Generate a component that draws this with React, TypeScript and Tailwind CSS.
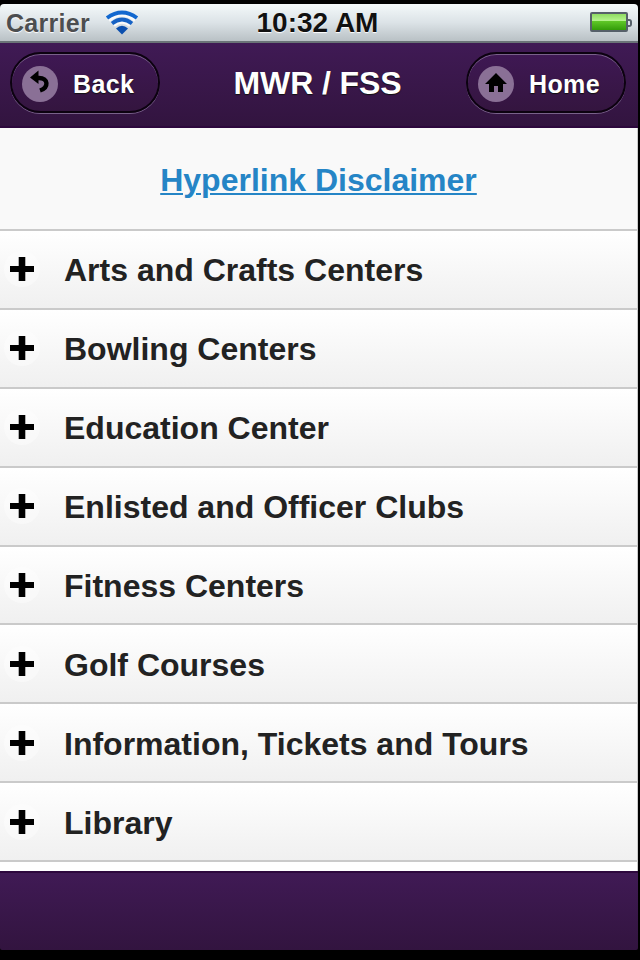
const sections = [
  'Arts and Crafts Centers',
  'Bowling Centers',
  'Education Center',
  'Enlisted and Officer Clubs',
  'Fitness Centers',
  'Golf Courses',
  'Information, Tickets and Tours',
  'Library',
];

function StatusBar() {
  return (
    <div className="flex h-[39px] shrink-0 items-center justify-between rounded-t-[4px] border-b-2 border-[#6b7478] bg-linear-to-b from-[#f4f9fa] via-[#dce3e7] to-[#b9c1c5] pr-[6px] pl-[6px]">
      <div className="flex w-[220px] items-center gap-[15px]">
        <span className="pt-px text-[25px] leading-none font-bold tracking-[0.3px] text-[#4c4e50] [text-shadow:0_1px_1px_#fff]">Carrier</span>
        <svg width="34" height="26" viewBox="0 0 34 26" className="mt-px" fill="none">
          <g stroke="#fff" strokeWidth="6" opacity=".8">
            <path d="M3 9.500Q17-2.500 31 9.500M8 14.500Q17 7 26 14.500" />
          </g>
          <path d="M2 8Q17-3 32 8" stroke="#1268cf" strokeWidth="4" />
          <path d="M7 13.500Q17 5.500 27 13.500" stroke="#1662c4" strokeWidth="3.800" />
          <path d="M11 18.500Q17 13 23 18.500L17 24.500Z" fill="#0b4fae" />
        </svg>
      </div>
      <span className="-ml-[3px] text-[28px] leading-none font-bold text-[#111] [text-shadow:0_1px_1px_#fff]">10:32 AM</span>
      <div className="flex w-[220px] items-center justify-end">
        <div className="mb-px h-[20px] w-[38px] rounded-[2px] border-2 border-[#566069] bg-linear-to-b from-[#7ddb45] via-[#5bc424] to-[#329b08]">
          <div className="h-[7px] bg-linear-to-b from-[#8fdc62] to-[#b6f58f]" />
        </div>
        <div className="h-[8px] w-[4px] rounded-r-[3px] border-2 border-l-0 border-[#566069]" />
      </div>
    </div>
  );
}

function NavButton({ label, children }: { label: string; children: React.ReactNode }) {
  return (
    <button className="flex h-[61px] items-center rounded-full border-2 border-[#0c0210] bg-linear-to-b from-[#3f1854] to-[#34153f] pt-[2px] pl-[10px] shadow-[0_1px_0_#79618a,inset_0_1px_0_#79618a]">
      <span className="flex size-[36px] items-center justify-center rounded-full bg-[#8a7096]">{children}</span>
      <span className="ml-[15px] pt-[2px] text-[25px] font-bold tracking-[0.4px] text-white [text-shadow:0_1px_1px_#111]">{label}</span>
    </button>
  );
}

function Header() {
  return (
    <header className="flex h-[85px] shrink-0 items-start justify-between border-b-2 border-[#2d083d] bg-linear-to-b from-[#401a55] to-[#32143f] pt-[9px] pr-[12px] pl-[10px]">
      <div className="grid w-[150px]">
        <NavButton label="Back">
          <svg width="22" height="24" viewBox="0 0 22 24" className="mb-[4px]">
            <path d="M1 7.500L9.500 0.500V14Z" />
            <path d="M7 8H10C19.500 8 20 17.500 11 20.500" fill="none" stroke="#000" strokeWidth="4.400" />
          </svg>
        </NavButton>
      </div>
      <h1 className="mt-[13px] ml-[9px] text-[32px] leading-[36px] font-bold tracking-[-0.1px] text-white [text-shadow:0_1px_1px_#111]">MWR / FSS</h1>
      <div className="grid w-[160px]">
        <NavButton label="Home">
          <svg width="22" height="20" viewBox="0 0 22 20" className="mb-[2px]">
            <path d="M11 0L22 11H18V19H13V13H9V19H4V11H0Z" />
          </svg>
        </NavButton>
      </div>
    </header>
  );
}

export default function App() {
  return (
    <div className="flex h-[960px] w-[640px] flex-col overflow-hidden bg-black pt-[4px] pr-[2px] font-['Liberation_Sans',Arial,sans-serif]">
      <StatusBar />
      <Header />
      <main className="h-[743px] shrink-0 overflow-hidden border-r border-[#ccc] bg-white">
        <div className="flex h-[101px] items-center justify-center bg-[#f9f9f9] pt-[3px]">
          <a className="text-[32px] leading-[40px] font-bold text-[#2585c6] underline decoration-2 underline-offset-[2px]">Hyperlink Disclaimer</a>
        </div>
        <ul>
          {sections.map((title) => (
            <li key={title} className="flex h-[78.9px] items-center border-t-2 border-[#cacaca] bg-linear-to-b from-white to-[#f0f0f0] pl-[4px]">
              <span className="flex size-[36px] items-center justify-center rounded-full bg-white/40">
                <svg width="24" height="24" viewBox="0 0 24 24">
                  <path d="M8.700 0H15.300V9H24V15H15.300V24H8.700V15H0V9H8.700Z" />
                </svg>
              </span>
              <span className="ml-[24px] pt-[2px] text-[32px] leading-[40px] font-bold whitespace-nowrap text-[#222]">{title}</span>
            </li>
          ))}
        </ul>
        <div className="h-[2px] bg-[#cacaca]" />
      </main>
      <footer className="h-[79px] shrink-0 rounded-b-[2px] border-t-2 border-[#2d083d] bg-linear-to-b from-[#401a55] to-[#32143f]" />
    </div>
  );
}
